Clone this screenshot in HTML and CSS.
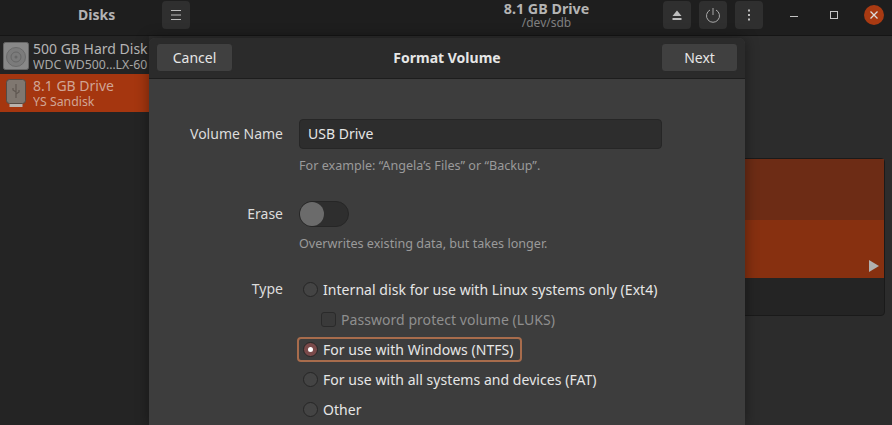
FILE: index.html
```html
<!DOCTYPE html>
<html lang="en">
<head>
<meta charset="utf-8">
<title>Disks</title>
<link rel="stylesheet" href="styles.css">
</head>
<body>
<div class="app">
  <header class="titlebar">
    <div class="tb-left">
      <span class="tb-appname">Disks</span>
      <button class="tb-btn"><svg width="14" height="14" viewBox="0 0 14 14"><path d="M2 2.500h10M2 7h10M2 11.500h10" stroke="#bdbdbd" stroke-width="1" fill="none"/></svg></button>
    </div>
    <div class="tb-center">
      <div class="tb-title">8.1 GB Drive</div>
      <div class="tb-sub">/dev/sdb</div>
    </div>
    <div class="tb-right">
      <button class="tb-btn"><svg width="14" height="14" viewBox="0 0 14 14"><path d="M7 2.500l4.500 5.500h-9z M2.500 10h9v2h-9z" fill="#bdbdbd"/></svg></button>
      <button class="tb-btn"><svg width="16" height="16" viewBox="0 0 16 16"><path d="M5 3a6.500 6.500 0 1 0 6 0M8 1v7" stroke="#a8a8a8" stroke-width="1" fill="none"/></svg></button>
      <button class="tb-btn"><svg width="14" height="14" viewBox="0 0 14 14"><path d="M6 1.500h2v2h-2zM6 6h2v2h-2zM6 10.500h2v2h-2z" fill="#bdbdbd"/></svg></button>
      <div class="wm">
        <svg class="wm-min" width="10" height="10" viewBox="0 0 10 10"><path d="M1 6.500h8" stroke="#c4c4c4" stroke-width="1"/></svg>
        <svg class="wm-max" width="10" height="10" viewBox="0 0 10 10"><rect x="1.500" y="1.500" width="7" height="7" fill="none" stroke="#c4c4c4"/></svg>
        <span class="wm-close"><svg width="10" height="10" viewBox="0 0 10 10"><path d="M1.500 1.500l7 7M8.500 1.500l-7 7" stroke="#dcdcdc" stroke-width="1.300"/></svg></span>
      </div>
    </div>
  </header>
  <div class="main">
    <aside class="sidebar">
      <div class="disk">
        <svg class="disk-icon" width="26" height="28" viewBox="0 0 26 28"><rect x="0.500" y="0.500" width="25" height="27" rx="2" fill="#888" stroke="#666"/><circle cx="13" cy="15" r="9.500" fill="#7b7b7b" stroke="#6a6a6a"/><circle cx="13" cy="15" r="5" fill="none" stroke="#666"/><circle cx="13" cy="15" r="1.500" fill="#666"/></svg>
        <div class="disk-text"><div class="disk-name">500 GB Hard Disk</div><div class="disk-sub">WDC WD500…LX-60</div></div>
      </div>
      <div class="disk active">
        <svg class="disk-icon usb" width="20" height="29" viewBox="0 0 20 29"><rect x="3.500" y="23" width="13" height="5" fill="#b9b2ad"/><rect x="0.500" y="0.500" width="19" height="24" rx="3" fill="#7f7770" stroke="#554b45"/><path d="M10 5v14M10 13l-3-2v-2M10 15l3-2v-2" stroke="#5f5751" stroke-width="1.200" fill="none"/></svg>
        <div class="disk-text"><div class="disk-name">8.1 GB Drive</div><div class="disk-sub">YS Sandisk</div></div>
      </div>
    </aside>
    <section class="content">
      <div class="volume">
        <div class="vol-bars"><div class="vol-top"></div><div class="vol-bottom"><span class="vol-play"></span></div></div>
      </div>
    </section>
  </div>

  <div class="dialog">
    <div class="dlg-head">
      <button class="dlg-btn cancel">Cancel</button>
      <div class="dlg-title">Format Volume</div>
      <button class="dlg-btn next">Next</button>
    </div>
    <div class="dlg-body">
      <div class="form">
        <label class="lbl lbl-name">Volume Name</label>
        <div class="field field-name">
          <div class="input">USB Drive</div>
          <div class="hint">For example: “Angela’s Files” or “Backup”.</div>
        </div>
        <label class="lbl lbl-erase">Erase</label>
        <div class="field field-erase">
          <div class="switch"><span class="knob"></span></div>
          <div class="hint">Overwrites existing data, but takes longer.</div>
        </div>
        <label class="lbl lbl-type">Type</label>
        <div class="types">
          <div class="opt"><span class="radio"></span>Internal disk for use with Linux systems only (Ext4)</div>
          <div class="opt sub"><span class="check"></span>Password protect volume (LUKS)</div>
          <div class="opt selected"><span class="radio on"></span>For use with Windows (NTFS)</div>
          <div class="opt"><span class="radio"></span>For use with all systems and devices (FAT)</div>
          <div class="opt"><span class="radio"></span>Other</div>
        </div>
      </div>
    </div>
  </div>
</div>
</body>
</html>
```
FILE: styles.css
```css
* { box-sizing: border-box; }
html, body { margin: 0; height: 100%; overflow: hidden; }
body { font-family: "Noto Sans", "Open Sans", sans-serif; font-size: 14px; color: #eee; background: #2d2d2d; }
button { font: inherit; border: 0; padding: 0; color: inherit; }

.app { position: relative; width: 892px; height: 425px; display: flex; flex-direction: column; overflow: hidden; }

.titlebar { height: 36px; flex: none; background: #1e1e1e; border-bottom: 1px solid #151515; display: flex; align-items: flex-start; position: relative; }
.tb-left { width: 190px; flex: none; display: flex; padding-top: 1px; }
.tb-appname { width: 162px; padding-left: 78px; font-weight: 700; font-size: 14px; line-height: 28px; color: #b4b4b4; }
.tb-btn { width: 28px; height: 28px; border-radius: 4px; background: #2f2f2f; display: flex; align-items: center; justify-content: center; }
.tb-center { flex: 1; text-align: center; padding-left: 240px; padding-top: 1px; white-space: nowrap; }
.tb-title { font-weight: 700; font-size: 14.3px; line-height: 15px; color: #b4b4b4; }
.tb-sub { font-size: 12px; line-height: 14px; color: #808080; }
.tb-right { display: flex; gap: 8px; padding-top: 1px; flex: none; }
.wm { display: flex; align-items: center; height: 28px; width: 121px; padding-left: 18px; }
.wm-min { margin-right: 30px; }
.wm-max { margin-right: 25px; }
.wm-close { width: 20px; height: 20px; border-radius: 50%; background: #a93a12; display: flex; align-items: center; justify-content: center; }

.main { flex: 1; display: flex; min-height: 0; }
.sidebar { width: 149px; flex: none; background: #242424; padding-top: 1px; overflow: hidden; }
.disk { height: 37px; display: flex; align-items: center; overflow: hidden; padding-left: 3px; gap: 4px; }
.disk.active { background: #a5360f; height: 38px; }
.disk-icon { flex: none; }
.usb { margin-left: 3px; margin-right: 3px; }
.disk-text { min-width: 0; overflow: hidden; }
.disk-name { font-size: 14px; line-height: 17px; color: #b5b5b5; white-space: nowrap; }
.disk-sub { font-size: 12.3px; line-height: 15px; color: #a8a8a8; white-space: nowrap; }
.active .disk-name, .active .disk-sub { color: #d0a595; }
.content { flex: 1; background: #2c2c2c; padding: 122px 7px 0 0; display: flex; justify-content: flex-end; align-items: flex-start; }
.volume { width: 400px; height: 158px; background: #242424; border: 1px solid #1a1a1a; border-radius: 0 4px 4px 0; }
.vol-top { height: 61px; background: #6d2c15; }
.vol-bottom { height: 58px; background: #873010; display: flex; justify-content: flex-end; align-items: center; padding-top: 34px; padding-right: 5px; }
.vol-play { width: 0; height: 0; border-left: 10px solid #b0b0b0; border-top: 6px solid transparent; border-bottom: 6px solid transparent; }

.dialog { position: absolute; left: 149px; top: 38px; width: 596px; height: 387px; border-radius: 6px 6px 0 0; background: #3d3d3d; box-shadow: 0 0 14px rgba(0,0,0,.4); display: flex; flex-direction: column; overflow: hidden; }
.dlg-head { height: 41px; flex: none; background: #2b2b2b; border-bottom: 1px solid #1d1d1d; display: flex; align-items: center; justify-content: space-between; padding: 0 7px 2px 7px; }
.dlg-btn { width: 77px; height: 29px; border-radius: 4px; background: #404040; border: 1px solid #2a2a2a; color: #e6e6e6; font-size: 14px; }
.dlg-title { font-weight: 700; font-size: 14px; color: #e6e6e6; }
.dlg-body { flex: 1; padding-top: 40px; }
.form { display: grid; grid-template-columns: 134px 1fr; column-gap: 16px; }
.lbl { text-align: right; font-size: 14px; color: #dcdcdc; }
.lbl-name { line-height: 30px; }
.lbl-erase { line-height: 26px; }
.lbl-type { line-height: 30px; }
.field { display: flex; flex-direction: column; align-items: flex-start; }
.field-name { padding-bottom: 27px; }
.field-erase { padding-bottom: 22px; }
.input { width: 363px; height: 30px; background: #2d2d2d; border: 1px solid #262626; border-radius: 4px; padding-left: 8px; line-height: 28px; font-size: 14px; color: #e6e6e6; }
.hint { font-size: 12.6px; line-height: 16px; margin-top: 9px; color: #9a9a9a; }
.switch { width: 50px; height: 26px; border-radius: 13px; background: #2e2e2e; border: 1px solid #262626; }
.knob { display: block; width: 24px; height: 24px; border-radius: 50%; background: #6b6b6b; }
.types { display: flex; flex-direction: column; }
.opt { height: 30px; display: flex; align-items: center; font-size: 14px; letter-spacing: .05px; color: #e6e6e6; padding-left: 4px; white-space: nowrap; }
.opt.sub { color: #8f8f8f; padding-left: 22px; }
.opt.selected { width: 225px; height: 25px; margin: 3px 0 2px -2px; padding-left: 4px; border: 2px solid #a86c4c; border-radius: 4px; }
.radio { width: 15px; height: 15px; border-radius: 50%; background: #444; border: 1px solid #262626; margin-right: 5px; flex: none; position: relative; }
.radio.on { background: #7a4a4a; }
.radio.on::after { content: ""; position: absolute; left: 4px; top: 4px; width: 5px; height: 5px; border-radius: 50%; background: #fff; }
.check { width: 15px; height: 15px; border-radius: 3px; background: #3a3a3a; border: 1px solid #2a2a2a; margin-right: 5px; flex: none; }
```
